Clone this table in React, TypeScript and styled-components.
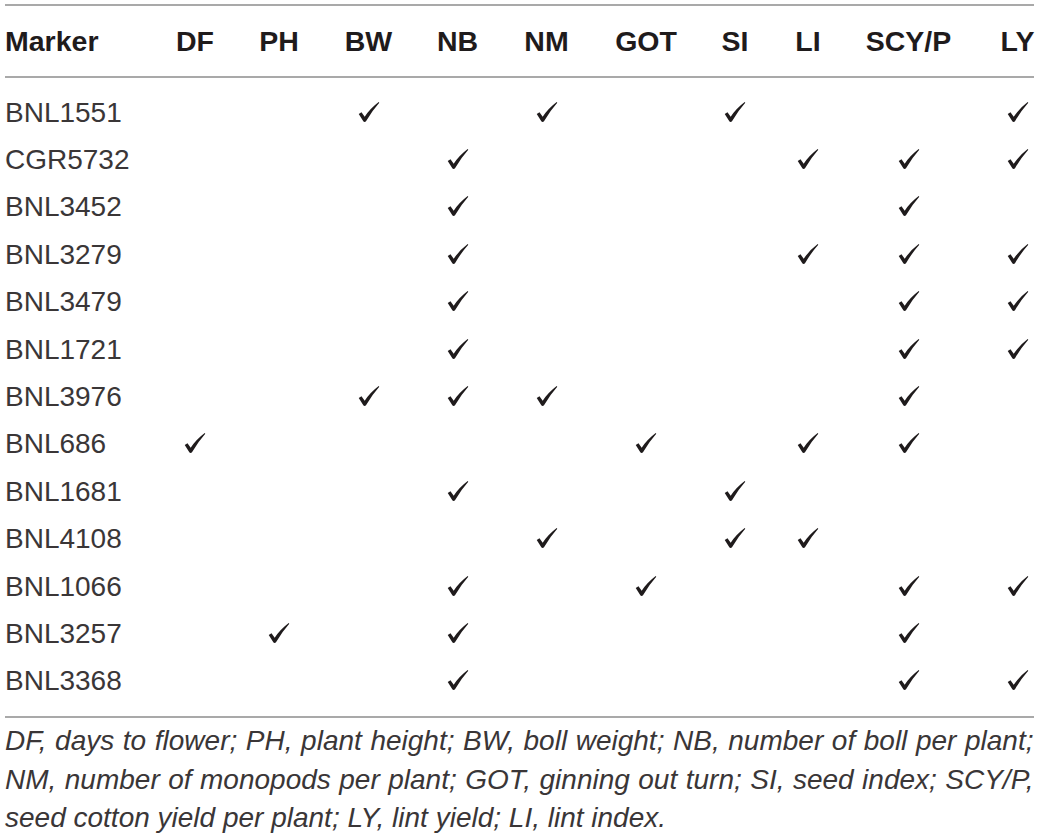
import styled, { createGlobalStyle } from "styled-components";

const GlobalStyle = createGlobalStyle`
  html, body {
    margin: 0;
    padding: 0;
    background: #ffffff;
  }
  #root {
    overflow: hidden;
  }
`;

const COLUMNS = ["DF", "PH", "BW", "NB", "NM", "GOT", "SI", "LI", "SCY/P", "LY"];

// track widths chosen so each column centre sits under its heading
const TRACKS = "119.5px 61px 27px 72px 26px 72px 47px 51px 15px 106px 32px";

const ROWS: { marker: string; hits: string[] }[] = [
  { marker: "BNL1551", hits: ["BW", "NM", "SI", "LY"] },
  { marker: "CGR5732", hits: ["NB", "LI", "SCY/P", "LY"] },
  { marker: "BNL3452", hits: ["NB", "SCY/P"] },
  { marker: "BNL3279", hits: ["NB", "LI", "SCY/P", "LY"] },
  { marker: "BNL3479", hits: ["NB", "SCY/P", "LY"] },
  { marker: "BNL1721", hits: ["NB", "SCY/P", "LY"] },
  { marker: "BNL3976", hits: ["BW", "NB", "NM", "SCY/P"] },
  { marker: "BNL686", hits: ["DF", "GOT", "LI", "SCY/P"] },
  { marker: "BNL1681", hits: ["NB", "SI"] },
  { marker: "BNL4108", hits: ["NM", "SI", "LI"] },
  { marker: "BNL1066", hits: ["NB", "GOT", "SCY/P", "LY"] },
  { marker: "BNL3257", hits: ["PH", "NB", "SCY/P"] },
  { marker: "BNL3368", hits: ["NB", "SCY/P", "LY"] },
];

const Page = styled.div`
  width: 1028.5px;
  padding: 4px 0 0 5px;
  font-family: "Liberation Sans", Arial, sans-serif;
  color: #231f20;
`;

const Head = styled.div`
  display: grid;
  grid-template-columns: ${TRACKS};
  column-gap: 40px;
  align-items: center;
  height: 70px;
  border-top: 2px solid #a9a9a9;
  border-bottom: 2px solid #a9a9a9;
`;

const HeadCell = styled.div<{ $first?: boolean }>`
  justify-self: ${(p) => (p.$first ? "start" : "center")};
  white-space: nowrap;
  font-size: 28.5px;
  font-weight: 700;
  color: #1f1b1c;
`;

const Body = styled.div`
  padding: 11px 0;
  border-bottom: 2px solid #a9a9a9;
`;

const Row = styled.div`
  display: grid;
  grid-template-columns: ${TRACKS};
  column-gap: 40px;
  align-items: center;
  height: 47.4px;
`;

const Marker = styled.div`
  justify-self: start;
  white-space: nowrap;
  font-size: 28px;
  color: #3a3637;
`;

const Mark = styled.div`
  justify-self: center;
  display: flex;
  width: 22px;
  height: 22px;
  margin-top: -2px;
`;

const Notes = styled.div`
  padding-top: 4px;
  font-size: 28px;
  font-style: italic;
  line-height: 38.5px;
  color: #3a3637;
`;

const NoteLine = styled.div<{ $spread?: boolean }>`
  white-space: nowrap;
  text-align: ${(p) => (p.$spread ? "justify" : "left")};
  text-align-last: ${(p) => (p.$spread ? "justify" : "left")};
`;

function Check() {
  return (
    <svg viewBox="0 0 24 24" width="22" height="22">
      <path
        d="M0.8 14.2 L3.8 12.2 L7.3 17.2 Q13.5 8 22.6 1.2 L23.2 1.9 Q15.5 10.5 8.9 21.8 Q8.2 22.8 7.2 22.8 Q6.3 22.8 5.8 22 Z"
        fill="#1f1b1c"
      />
    </svg>
  );
}

export default function App() {
  return (
    <>
      <GlobalStyle />
      <Page>
        <Head>
          <HeadCell $first>Marker</HeadCell>
          {COLUMNS.map((c) => (
            <HeadCell key={c}>{c}</HeadCell>
          ))}
        </Head>
        <Body>
          {ROWS.map((r) => (
            <Row key={r.marker}>
              <Marker>{r.marker}</Marker>
              {COLUMNS.map((c) =>
                r.hits.includes(c) ? (
                  <Mark key={c}>
                    <Check />
                  </Mark>
                ) : (
                  <span key={c} />
                )
              )}
            </Row>
          ))}
        </Body>
        <Notes>
          <NoteLine $spread>
            DF, days to flower; PH, plant height; BW, boll weight; NB, number of boll per plant;
          </NoteLine>
          <NoteLine $spread>
            NM, number of monopods per plant; GOT, ginning out turn; SI, seed index; SCY/P,
          </NoteLine>
          <NoteLine>seed cotton yield per plant; LY, lint yield; LI, lint index.</NoteLine>
        </Notes>
      </Page>
    </>
  );
}
